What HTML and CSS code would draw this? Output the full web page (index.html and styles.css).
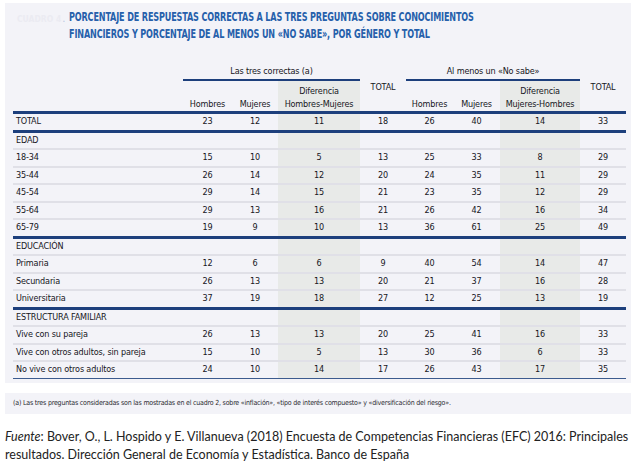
FILE: index.html
```html
<!DOCTYPE html>
<html lang="es">
<head>
<meta charset="utf-8">
<title>Cuadro 4</title>
<link rel="stylesheet" href="styles.css">
</head>
<body>
<div class="panel">
  <div class="title-row">
    <span class="ghost">CUADRO 4</span>
    <span class="dot">.</span>
    <h1 class="title"><span class="tline">PORCENTAJE DE RESPUESTAS CORRECTAS A LAS TRES PREGUNTAS SOBRE CONOCIMIENTOS</span><span class="tline">FINANCIEROS Y PORCENTAJE DE AL MENOS UN «NO SABE», POR GÉNERO Y TOTAL</span></h1>
  </div>
  <table class="data">
    <colgroup>
      <col class="c-lbl"><col class="c-h1"><col class="c-m1"><col class="c-d1"><col class="c-t1"><col class="c-h2"><col class="c-m2"><col class="c-d2"><col class="c-t2">
    </colgroup>
    <thead>
      <tr class="grp">
        <th rowspan="2" class="lbl blank"></th>
        <th colspan="3" class="grp-h">Las tres correctas (a)</th>
        <th rowspan="2" class="tot-h">TOTAL</th>
        <th colspan="3" class="grp-h">Al menos un «No sabe»</th>
        <th rowspan="2" class="tot-h">TOTAL</th>
      </tr>
      <tr class="sub">
        <th>Hombres</th>
        <th>Mujeres</th>
        <th class="dif">Diferencia<br>Hombres-Mujeres</th>
        <th>Hombres</th>
        <th>Mujeres</th>
        <th class="dif">Diferencia<br>Mujeres-Hombres</th>
      </tr>
    </thead>
    <tbody>
      <tr class="end"><td class="lbl">TOTAL</td><td>23</td><td>12</td><td class="dif">11</td><td>18</td><td>26</td><td>40</td><td class="dif">14</td><td>33</td></tr>
      <tr class="sec"><td class="lbl">EDAD</td><td></td><td></td><td class="dif"></td><td></td><td></td><td></td><td class="dif"></td><td></td></tr>
      <tr><td class="lbl">18-34</td><td>15</td><td>10</td><td class="dif">5</td><td>13</td><td>25</td><td>33</td><td class="dif">8</td><td>29</td></tr>
      <tr><td class="lbl">35-44</td><td>26</td><td>14</td><td class="dif">12</td><td>20</td><td>24</td><td>35</td><td class="dif">11</td><td>29</td></tr>
      <tr><td class="lbl">45-54</td><td>29</td><td>14</td><td class="dif">15</td><td>21</td><td>23</td><td>35</td><td class="dif">12</td><td>29</td></tr>
      <tr><td class="lbl">55-64</td><td>29</td><td>13</td><td class="dif">16</td><td>21</td><td>26</td><td>42</td><td class="dif">16</td><td>34</td></tr>
      <tr class="end"><td class="lbl">65-79</td><td>19</td><td>9</td><td class="dif">10</td><td>13</td><td>36</td><td>61</td><td class="dif">25</td><td>49</td></tr>
      <tr class="sec"><td class="lbl">EDUCACIÓN</td><td></td><td></td><td class="dif"></td><td></td><td></td><td></td><td class="dif"></td><td></td></tr>
      <tr><td class="lbl">Primaria</td><td>12</td><td>6</td><td class="dif">6</td><td>9</td><td>40</td><td>54</td><td class="dif">14</td><td>47</td></tr>
      <tr><td class="lbl">Secundaria</td><td>26</td><td>13</td><td class="dif">13</td><td>20</td><td>21</td><td>37</td><td class="dif">16</td><td>28</td></tr>
      <tr class="end"><td class="lbl">Universitaria</td><td>37</td><td>19</td><td class="dif">18</td><td>27</td><td>12</td><td>25</td><td class="dif">13</td><td>19</td></tr>
      <tr class="sec"><td class="lbl">ESTRUCTURA FAMILIAR</td><td></td><td></td><td class="dif"></td><td></td><td></td><td></td><td class="dif"></td><td></td></tr>
      <tr><td class="lbl">Vive con su pareja</td><td>26</td><td>13</td><td class="dif">13</td><td>20</td><td>25</td><td>41</td><td class="dif">16</td><td>33</td></tr>
      <tr><td class="lbl">Vive con otros adultos, sin pareja</td><td>15</td><td>10</td><td class="dif">5</td><td>13</td><td>30</td><td>36</td><td class="dif">6</td><td>33</td></tr>
      <tr class="last"><td class="lbl">No vive con otros adultos</td><td>24</td><td>10</td><td class="dif">14</td><td>17</td><td>26</td><td>43</td><td class="dif">17</td><td>35</td></tr>
    </tbody>
  </table>
</div>
<div class="note">(a) Las tres preguntas consideradas son las mostradas en el cuadro 2, sobre «inflación», «tipo de interés compuesto» y «diversificación del riesgo».</div>
<p class="source"><em>Fuente</em>: Bover, O., L. Hospido y E. Villanueva (2018) Encuesta de Competencias Financieras (EFC) 2016: Principales<br>resultados. Dirección General de Economía y Estadística. Banco de España</p>
</body>
</html>
```
FILE: styles.css
```css
* { box-sizing: border-box; }
body {
  margin: 0;
  background: #ffffff;
  font-family: "DejaVu Sans Condensed", "Liberation Sans", sans-serif;
}
.panel {
  margin: 3px 0 0 5px;
  width: 626px;
  background: #f3f3f8;
  padding: 5px 0 4px;
}
.title-row {
  display: flex;
  align-items: flex-start;
  height: 54px;
}
.ghost {
  width: 60px;
  padding: 6px 0 0 12px;
  font-size: 8.5px;
  font-weight: bold;
  color: #ebebf2;
  white-space: nowrap;
}
.dot {
  width: 7px;
  padding-top: 2px;
  font-size: 11px;
  line-height: 17px;
  color: #b8c8e2;
}
.title {
  margin: 0;
  font-size: 12.5px;
  line-height: 17px;
  font-weight: bold;
  color: #2660ab;
  letter-spacing: -0.2px;
  white-space: nowrap;
}
.tline {
  display: block;
  transform: scaleX(0.72);
  transform-origin: left top;
}
.data {
  margin-left: 8px;
  width: 613px;
  table-layout: fixed;
  border-collapse: separate;
  border-spacing: 0;
  font-size: 9px;
  letter-spacing: -0.15px;
  color: #16161c;
}
.c-lbl { width: 170px; }
.c-h1 { width: 49px; }
.c-m1 { width: 46px; }
.c-d1 { width: 82px; }
.c-t1 { width: 46px; }
.c-h2 { width: 47px; }
.c-m2 { width: 47px; }
.c-d2 { width: 80px; }
.c-t2 { width: 46px; }
.data th {
  font-weight: normal;
  padding: 0;
  text-align: center;
}
.grp th { height: 19px; vertical-align: middle; }
.grp .grp-h {
  border-bottom: 2px solid #1d3f7c;
  padding-top: 1px;
}
.grp .blank, .grp .tot-h {
  border-bottom: 3px solid #1d3f7c;
}
.sub th {
  height: 33px;
  vertical-align: bottom;
  padding-bottom: 0;
  line-height: 13px;
  border-bottom: 3px solid #1d3f7c;
}
.data td {
  padding: 0;
  line-height: 15.5px;
  height: 17.5px;
  text-align: center;
  border-bottom: 2px solid #e0e0e7;
}
.data td.lbl {
  text-align: left;
  padding-left: 3px;
}
.data tr.end td {
  height: 18.5px;
  border-bottom: 3px solid #1d3f7c;
}
.data tr.last td {
  height: 16.5px;
  border-bottom: 1px solid #3c5b8e;
}
.dif { background: #e8eae8; }
.note {
  margin: 10px 0 0 5px;
  width: 626px;
  height: 21px;
  background: #f3f3f8;
  padding-left: 8px;
  font-size: 7px;
  letter-spacing: -0.2px;
  line-height: 21px;
  color: #2a2a30;
  white-space: nowrap;
}
.source {
  margin: 14px 0 0 5px;
  font-family: Lato, "Noto Sans", sans-serif;
  font-size: 12.5px;
  line-height: 18px;
  color: #222;
  white-space: nowrap;
}
```
